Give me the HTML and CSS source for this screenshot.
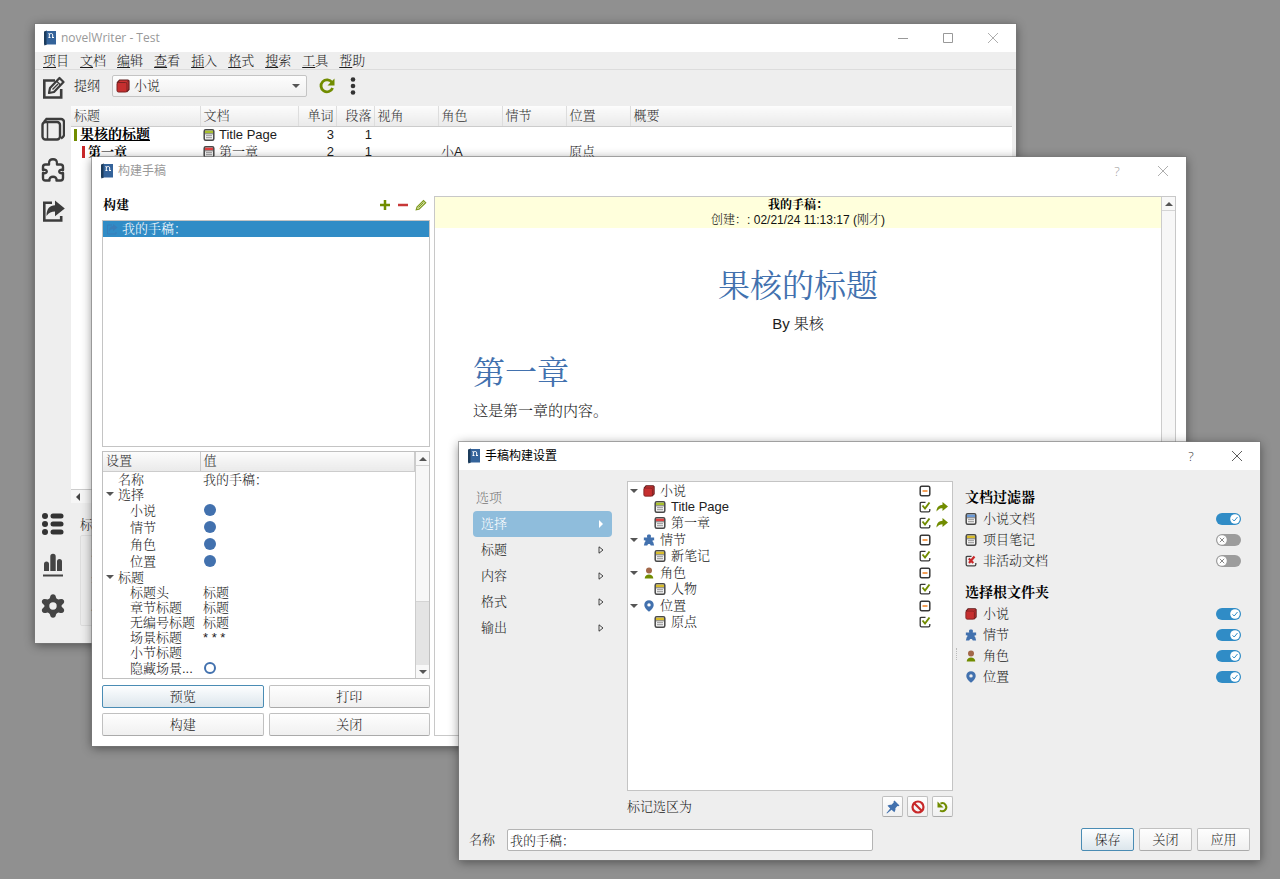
FILE: index.html
```html
<!DOCTYPE html>
<html lang="zh-CN">
<head>
<meta charset="utf-8">
<title>novelWriter - Test</title>
<link rel="stylesheet" href="styles.css">
</head>
<body>
<svg class="defs" aria-hidden="true">
  <symbol id="app" viewBox="0 0 14 16"><path d="M1 1.500 4 .5v14l-2.500 1L1 14z" fill="#1c3c5c"/><path d="M3.500 1H13v13.500H3.500z" fill="#34639a"/><path d="M5.500 7.500h2M6.300 7.500V3.500H5.500M6.300 4.600c1-1.500 3.400-1.500 3.400.3v2.600M9 7.500h2" fill="none" stroke="#fff" stroke-width="1"/></symbol>
  <symbol id="edit" viewBox="0 0 24 24"><path d="M14 4.500H3.300v17h16.900V13" fill="none" stroke="#3c3c3c" stroke-width="2.600"/><path d="m9 12 9.500-10 4 4L13 16l-5 1z" fill="#eee" stroke="#3c3c3c" stroke-width="2.200" stroke-linejoin="round"/><path d="m15.500 5 4 4M11.500 13.500l5.500-5.500" stroke="#3c3c3c" stroke-width="1.400"/></symbol>
  <symbol id="novel" viewBox="0 0 24 24"><path d="m3 5 2.500-3h14.500a3 3 0 0 1 3 3v13q0 1.500-3 3.500" fill="none" stroke="#3c3c3c" stroke-width="2.400"/><rect x="1.500" y="5" width="17.500" height="17.500" rx="3" fill="none" stroke="#3c3c3c" stroke-width="2.400"/><path d="M6.500 6v16" stroke="#3c3c3c" stroke-width="1.500"/></symbol>
  <symbol id="puzzle" viewBox="0 0 24 24"><path d="M4.500 6.500H8C7.500 2 10 1.300 12 1.300S16.500 2 16 6.500h3.500Q22 6.500 22 9v3c-5-1.500-5 4.500 0 3v5q0 2.500-2.500 2.500h-4c1-5-8-5-7 0h-4Q2 22.500 2 20v-5c5 1.500 5-4.500 0-3V9q0-2.500 2.500-2.500z" fill="none" stroke="#3c3c3c" stroke-width="2.400" stroke-linejoin="round"/></symbol>
  <symbol id="export" viewBox="0 0 24 24"><path d="M11 3.800H3.300v17.700h16.900V17" fill="none" stroke="#3c3c3c" stroke-width="2.600"/><path d="M14 1.500 23.800 9.500 14 17.300v-4.800c-3.500 0-6 1-8.500 4.500C5.500 9.500 9 6.500 14 6.300z" fill="#3c3c3c"/></symbol>
  <symbol id="list" viewBox="0 0 24 24"><g fill="#333"><circle cx="4" cy="4" r="3"/><circle cx="4" cy="12" r="3"/><circle cx="4" cy="20" r="3"/><rect x="9.500" y="1.500" width="13" height="5" rx="2.500"/><rect x="9.500" y="9.500" width="13" height="5" rx="2.500"/><rect x="9.500" y="17.500" width="13" height="5" rx="2.500"/></g></symbol>
  <symbol id="stats" viewBox="0 0 24 24"><g fill="#444"><path d="M3 18v-7a2.500 2.500 0 0 1 5 0v7zM9.300 18V3.500a2.500 2.500 0 0 1 5.400 0V18zM16 18V8.500a2.500 2.500 0 0 1 5 0V18z"/><rect x="2" y="21.500" width="20" height="2"/></g></symbol>
  <symbol id="gear" viewBox="0 0 24 24"><path fill="#444" fill-rule="evenodd" d="M9 3.500Q9.500.3 12 .3t3 3.200q.3 1 1.300 1.600 1 .5 2 .2 3.200-1.200 4.500 1 1.200 2.200-1.400 4.200-.9.700-.9 1.500t.9 1.500q2.600 2 1.400 4.200-1.300 2.200-4.500 1-1-.3-2 .2-1 .6-1.300 1.600-.5 3.200-3 3.200t-3-3.200q-.3-1-1.300-1.600-1-.5-2-.2-3.200 1.200-4.500-1-1.200-2.200 1.400-4.200.9-.7.900-1.500t-.9-1.500Q0 8.500 1.200 6.300q1.300-2.200 4.500-1 1 .3 2-.2Q8.700 4.500 9 3.500zM12 8.300a3.700 3.700 0 1 0 0 7.400 3.700 3.700 0 0 0 0-7.400z"/></symbol>
  <symbol id="book" viewBox="0 0 14 14"><path d="M1 4 3.500 1H12l1 1v8.500L10.500 13" fill="#c33" stroke="#5f1f1f" stroke-width="1.200"/><rect x="1" y="3.500" width="10" height="9.500" rx="1.500" fill="#c62f2f" stroke="#7a2222"/><path d="m11 3.500 1.800-2" stroke="#7a2222"/></symbol>
  <symbol id="doc" viewBox="0 0 12 12"><rect x="1.200" y=".8" width="9.600" height="10.400" rx="1.500" fill="#f4f4f4" stroke="#484848" stroke-width="1.500"/><path d="M2 1.700h8v2.500H2z" fill="currentColor"/><path d="M2 4.800h8" stroke="#555" stroke-width=".8"/><path d="M3 6.700h6M3 8.700h6" stroke="#888" stroke-width=".9"/></symbol>
  <symbol id="star" viewBox="0 0 14 14"><path fill="#4271ae" d="M5 4C4 1 5.500.5 7 .5S10 1 9 4h4v3.500c-2.500-.5-2.500 1.500-1 2L13 13.500H9c0-2.500-4-2.500-4 0H1L2 9.500c1.500-.5 1.500-2.500-1-2V4z"/></symbol>
  <symbol id="person" viewBox="0 0 14 14"><circle cx="7" cy="4" r="3.500" fill="#a3684a"/><path d="M2 13.500c0-6.500 10-6.500 10 0z" fill="#718c00"/></symbol>
  <symbol id="pin" viewBox="0 0 14 14"><path fill="#4271ae" fill-rule="evenodd" d="M7 13.800Q1.500 9 1.500 5.700a5.500 5.500 0 0 1 11 0Q12.500 9 7 13.800zM7 3.700a2 2 0 1 0 0 4 2 2 0 0 0 0-4z"/></symbol>
  <symbol id="check" viewBox="0 0 12 12"><path d="M6.500 1.300H2.500Q1.200 1.300 1.200 2.500v7q0 1.300 1.300 1.300h7q1.300 0 1.300-1.300V8" fill="none" stroke="#383838" stroke-width="1.300"/><path d="M3.500 4.500 6 7.500l4.500-6" fill="none" stroke="#718c00" stroke-width="1.900"/></symbol>
  <symbol id="minus" viewBox="0 0 12 12"><rect x="1.200" y="1.200" width="9.600" height="9.600" rx="1.500" fill="#fff" stroke="#383838" stroke-width="1.500"/><path d="M3.500 6h5" stroke="#f08020" stroke-width="1.500"/></symbol>
  <symbol id="cross" viewBox="0 0 12 12"><path d="M6.500 1.300H2.500Q1.200 1.300 1.200 2.500v7q0 1.300 1.300 1.300h7q1.300 0 1.300-1.300V8" fill="none" stroke="#444" stroke-width="1.300"/><path d="m3.800 3.500 4.500 4.500M9.500 1.500 4 8" fill="none" stroke="#c82829" stroke-width="2.200"/></symbol>
  <symbol id="arrow" viewBox="0 0 12 12"><path fill="#718c00" d="m6.500 1 5.500 4.500L6.500 10V7.300C4 7.300 2.500 8 .5 10.500.5 6 3 4 6.500 3.700z"/></symbol>
  <symbol id="refresh" viewBox="0 0 16 16"><path d="M13 4.500A6 6 0 1 0 13.600 10" fill="none" stroke="#718c00" stroke-width="2.800"/><path d="M15.500 .5v7H8.500z" fill="#718c00"/></symbol>
  <symbol id="revert" viewBox="0 0 14 14"><path d="M4.500 3.600A4 4 0 1 1 4 10.500" fill="none" stroke="#718c00" stroke-width="2"/><path d="M1.500 1.500v6h6z" fill="#718c00"/></symbol>
  <symbol id="ban" viewBox="0 0 14 14"><circle cx="7" cy="7" r="5.500" fill="none" stroke="#c82829" stroke-width="2.200"/><path d="m3.500 3.500 7 7" stroke="#c82829" stroke-width="2.200"/></symbol>
  <symbol id="tack" viewBox="0 0 14 14"><path fill="#4271ae" d="m8.500.500 5 5-1.200.8-.9-.2-2 2.200q.6 2.300-1 4L5.500 9.800 1 13.500.500 13l3.700-4.500L1.500 5.800q1.800-1.600 4-1l2.200-2.200-.2-1z"/></symbol>
  <symbol id="plus" viewBox="0 0 12 12"><path d="M6 1v10M1 6h10" stroke="#718c00" stroke-width="2.500"/></symbol>
  <symbol id="dash" viewBox="0 0 12 12"><path d="M1 6h10" stroke="#c83838" stroke-width="2.500"/></symbol>
  <symbol id="pencil" viewBox="0 0 12 12"><path d="M1.200 10.800 2 8l6.500-6.500 2.200 2.200L4 10.200z" fill="#e4edc0" stroke="#7f9a20" stroke-width="1.200"/><path d="m3.500 8.500 5-5" stroke="#7f9a20"/></symbol>
  <symbol id="x" viewBox="0 0 12 12"><path d="m1 1 10 10M11 1 1 11" stroke="currentColor" stroke-width=".8"/></symbol>
  <symbol id="down" viewBox="0 0 8 4"><path d="M0 0h8L4 4z" fill="#555"/></symbol>
  <symbol id="up" viewBox="0 0 8 4"><path d="M0 4h8L4 0z" fill="#555"/></symbol>
  <symbol id="left" viewBox="0 0 4 8"><path d="M4 0v8L0 4z" fill="#444"/></symbol>
  <symbol id="tri" viewBox="0 0 6 8"><path d="M1 .8v6.400L5 4z" fill="none" stroke="currentColor" stroke-width=".8"/></symbol>
  <symbol id="trifill" viewBox="0 0 6 8"><path d="M1 0v8l4-4z" fill="#fff"/></symbol>
  <symbol id="knobon" viewBox="0 0 10 10"><circle cx="5" cy="5" r="4.800" fill="#fff"/><path d="m2.500 5.300 1.700 1.700L7.500 3" fill="none" stroke="#308cc6" stroke-width="1"/></symbol>
  <symbol id="knoboff" viewBox="0 0 10 10"><circle cx="5" cy="5" r="4.800" fill="#fff"/><path d="m2.800 2.800 4.400 4.400M7.200 2.800 2.800 7.200" stroke="#888" stroke-width="1"/></symbol>
</svg>

<main class="desktop">
<section class="window win-main">
  <header class="titlebar inactive">
    <svg class="i-app"><use href="#app"/></svg><h1 class="caption">novelWriter - Test</h1>
    <div class="controls wide">
      <button aria-label="最小化"><svg class="i12" viewBox="0 0 12 12"><path d="M1 6.500h10" stroke="currentColor"/></svg></button>
      <button aria-label="最大化"><svg class="i12" viewBox="0 0 12 12"><path d="M1.500 1.500h9v9h-9z" fill="none" stroke="currentColor"/></svg></button>
      <button aria-label="关闭"><svg class="i12"><use href="#x"/></svg></button>
    </div>
  </header>
  <nav class="menubar">
    <button><u>项</u>目</button><button><u>文</u>档</button><button><u>编</u>辑</button><button><u>查</u>看</button><button><u>插</u>入</button><button><u>格</u>式</button><button><u>搜</u>索</button><button><u>工</u>具</button><button><u>帮</u>助</button>
  </nav>
  <div class="main-body">
    <aside class="sidebar">
      <button aria-label="编辑"><svg class="i24"><use href="#edit"/></svg></button>
      <button aria-label="小说"><svg class="i24"><use href="#novel"/></svg></button>
      <button aria-label="笔记"><svg class="i24"><use href="#puzzle"/></svg></button>
      <button aria-label="构建"><svg class="i24"><use href="#export"/></svg></button>
      <span class="spring"></span>
      <button aria-label="详情"><svg class="i24"><use href="#list"/></svg></button>
      <button aria-label="统计"><svg class="i24"><use href="#stats"/></svg></button>
      <button aria-label="设置"><svg class="i24"><use href="#gear"/></svg></button>
    </aside>
    <div class="outline">
      <div class="toolbar">
        <label for="root">提纲</label>
        <div class="combo"><svg class="i14 combo-icon"><use href="#book"/></svg><select id="root"><option>小说</option></select><svg class="i-down combo-arrow"><use href="#down"/></svg></div>
        <button class="tool" aria-label="刷新"><svg class="i16"><use href="#refresh"/></svg></button>
        <button class="tool" aria-label="更多"><svg class="i-more" viewBox="0 0 6 18"><g fill="#333"><circle cx="3" cy="2.500" r="2.300"/><circle cx="3" cy="9" r="2.300"/><circle cx="3" cy="15.500" r="2.300"/></g></svg></button>
      </div>
      <div class="outline-scroll">
        <table class="outline-table">
          <colgroup><col class="c-title"><col class="c-doc"><col class="c-num"><col class="c-num"><col class="c-tag"><col class="c-tag"><col class="c-tag"><col class="c-tag"><col></colgroup>
          <thead><tr><th>标题</th><th>文档</th><th class="num">单词</th><th class="num">段落</th><th>视角</th><th>角色</th><th>情节</th><th>位置</th><th>概要</th></tr></thead>
          <tbody>
            <tr><td><span class="level green"><b><u>果核的标题</u></b></span></td><td><span class="with-icon"><svg class="i-doc c-green"><use href="#doc"/></svg>Title Page</span></td><td class="num">3</td><td class="num">1</td><td></td><td></td><td></td><td></td><td></td></tr>
            <tr><td><span class="level red"><b>第一章</b></span></td><td><span class="with-icon"><svg class="i-doc c-red"><use href="#doc"/></svg>第一章</span></td><td class="num">2</td><td class="num">1</td><td></td><td>小A</td><td></td><td>原点</td><td></td></tr>
          </tbody>
        </table>
      </div>
      <div class="hscroll"><svg class="i-left"><use href="#left"/></svg></div>
      <div class="details"><span>标题</span><div class="groupbox"><span>状态</span><span>字数</span><span>段落</span></div></div>
    </div>
  </div>
</section>

<section class="window win-build">
  <header class="titlebar inactive">
    <svg class="i-app"><use href="#app"/></svg><h2 class="caption">构建手稿</h2>
    <div class="controls"><button class="latin" aria-label="帮助">?</button><button aria-label="关闭"><svg class="i12"><use href="#x"/></svg></button></div>
  </header>
  <div class="build-body">
    <div class="build-left">
      <div class="build-head"><b>构建</b>
        <button aria-label="添加"><svg class="i12"><use href="#plus"/></svg></button>
        <button aria-label="删除"><svg class="i12"><use href="#dash"/></svg></button>
        <button aria-label="编辑构建"><svg class="i12"><use href="#pencil"/></svg></button>
      </div>
      <ul class="build-list"><li><svg class="i12 ghost" viewBox="0 0 12 12"><path d="M6 2H1.500v9H10V9" fill="none" stroke="#4271ae"/><path d="m7 1 4.500 3.500L7 8V6q-3 0-4 2.500Q3 3.500 7 3z" fill="#4271ae"/></svg>我的手稿：</li></ul>
      <div class="settings">
        <div class="settings-scroll">
          <table class="settings-table">
            <colgroup><col class="c-key"><col></colgroup>
            <thead><tr><th>设置</th><th>值</th></tr></thead>
            <tbody>
              <tr><td class="l1">名称</td><td>我的手稿：</td></tr>
              <tr><td class="l1"><svg class="i-down branch"><use href="#down"/></svg>选择</td><td></td></tr>
              <tr class="tall"><td class="l2">小说</td><td><i class="dot"></i></td></tr>
              <tr class="tall"><td class="l2">情节</td><td><i class="dot"></i></td></tr>
              <tr class="tall"><td class="l2">角色</td><td><i class="dot"></i></td></tr>
              <tr class="tall"><td class="l2">位置</td><td><i class="dot"></i></td></tr>
              <tr><td class="l1"><svg class="i-down branch"><use href="#down"/></svg>标题</td><td></td></tr>
              <tr><td class="l2">标题头</td><td>标题</td></tr>
              <tr><td class="l2">章节标题</td><td>标题</td></tr>
              <tr><td class="l2">无编号标题</td><td>标题</td></tr>
              <tr><td class="l2">场景标题</td><td>* * *</td></tr>
              <tr><td class="l2">小节标题</td><td></td></tr>
              <tr class="tall"><td class="l2">隐藏场景...</td><td><i class="dot hollow"></i></td></tr>
              <tr class="tall"><td class="l2"></td><td><i class="dot"></i></td></tr>
            </tbody>
          </table>
        </div>
        <div class="vscroll"><span class="vend"><svg class="i-down"><use href="#up"/></svg></span><span class="vthumb"></span><span class="vtrack"></span><span class="vend"><svg class="i-down"><use href="#down"/></svg></span></div>
      </div>
      <div class="build-buttons"><button class="btn primary">预览</button><button class="btn">打印</button><button class="btn">构建</button><button class="btn">关闭</button></div>
    </div>
    <div class="preview">
      <article class="page">
        <div class="banner"><b>我的手稿：</b><span>创建：: 02/21/24 11:13:17 (刚才)</span></div>
        <h1 class="book-title">果核的标题</h1>
        <p class="byline">By 果核</p>
        <h2 class="chapter">第一章</h2>
        <p class="para">这是第一章的内容。</p>
      </article>
      <div class="vscroll"><span class="vend"><svg class="i-down"><use href="#up"/></svg></span><span class="vthumb"></span></div>
    </div>
  </div>
</section>

<section class="window win-settings">
  <header class="titlebar">
    <svg class="i-app"><use href="#app"/></svg><h2 class="caption">手稿构建设置</h2>
    <div class="controls"><button class="latin" aria-label="帮助">?</button><button aria-label="关闭"><svg class="i12"><use href="#x"/></svg></button></div>
  </header>
  <div class="opts">
    <div class="opts-main">
      <nav class="opt-nav">
        <h3>选项</h3>
        <button class="on">选择<svg class="i-tri"><use href="#trifill"/></svg></button>
        <button>标题<svg class="i-tri"><use href="#tri"/></svg></button>
        <button>内容<svg class="i-tri"><use href="#tri"/></svg></button>
        <button>格式<svg class="i-tri"><use href="#tri"/></svg></button>
        <button>输出<svg class="i-tri"><use href="#tri"/></svg></button>
      </nav>
      <div class="tree-col">
        <ul class="tree">
          <li class="root"><svg class="i-down"><use href="#down"/></svg><svg class="i12"><use href="#book"/></svg><span>小说</span><svg class="i12"><use href="#minus"/></svg><i></i></li>
          <li><svg class="i-doc c-green"><use href="#doc"/></svg><span>Title Page</span><svg class="i12"><use href="#check"/></svg><svg class="i12"><use href="#arrow"/></svg></li>
          <li><svg class="i-doc c-red"><use href="#doc"/></svg><span>第一章</span><svg class="i12"><use href="#check"/></svg><svg class="i12"><use href="#arrow"/></svg></li>
          <li class="root"><svg class="i-down"><use href="#down"/></svg><svg class="i12"><use href="#star"/></svg><span>情节</span><svg class="i12"><use href="#minus"/></svg><i></i></li>
          <li><svg class="i-doc c-yellow"><use href="#doc"/></svg><span>新笔记</span><svg class="i12"><use href="#check"/></svg><i></i></li>
          <li class="root"><svg class="i-down"><use href="#down"/></svg><svg class="i12"><use href="#person"/></svg><span>角色</span><svg class="i12"><use href="#minus"/></svg><i></i></li>
          <li><svg class="i-doc c-yellow"><use href="#doc"/></svg><span>人物</span><svg class="i12"><use href="#check"/></svg><i></i></li>
          <li class="root"><svg class="i-down"><use href="#down"/></svg><svg class="i12"><use href="#pin"/></svg><span>位置</span><svg class="i12"><use href="#minus"/></svg><i></i></li>
          <li><svg class="i-doc c-yellow"><use href="#doc"/></svg><span>原点</span><svg class="i12"><use href="#check"/></svg><i></i></li>
        </ul>
        <div class="mark"><span>标记选区为</span>
          <button class="btn sq" aria-label="固定"><svg class="i14"><use href="#tack"/></svg></button>
          <button class="btn sq" aria-label="排除"><svg class="i14"><use href="#ban"/></svg></button>
          <button class="btn sq" aria-label="重置"><svg class="i14"><use href="#revert"/></svg></button>
        </div>
      </div>
      <div class="grip"></div>
      <div class="filters">
        <h3>文档过滤器</h3>
        <label><svg class="i-doc c-blue"><use href="#doc"/></svg><span>小说文档</span><span class="switch"><input type="checkbox" checked><svg><use href="#knobon"/></svg></span></label>
        <label><svg class="i-doc c-yellow"><use href="#doc"/></svg><span>项目笔记</span><span class="switch"><input type="checkbox"><svg><use href="#knoboff"/></svg></span></label>
        <label><svg class="i12"><use href="#cross"/></svg><span>非活动文档</span><span class="switch"><input type="checkbox"><svg><use href="#knoboff"/></svg></span></label>
        <h3>选择根文件夹</h3>
        <label><svg class="i12"><use href="#book"/></svg><span>小说</span><span class="switch"><input type="checkbox" checked><svg><use href="#knobon"/></svg></span></label>
        <label><svg class="i12"><use href="#star"/></svg><span>情节</span><span class="switch"><input type="checkbox" checked><svg><use href="#knobon"/></svg></span></label>
        <label><svg class="i12"><use href="#person"/></svg><span>角色</span><span class="switch"><input type="checkbox" checked><svg><use href="#knobon"/></svg></span></label>
        <label><svg class="i12"><use href="#pin"/></svg><span>位置</span><span class="switch"><input type="checkbox" checked><svg><use href="#knobon"/></svg></span></label>
      </div>
    </div>
    <footer class="opts-foot">
      <label for="name">名称</label><input id="name" type="text" value="我的手稿：">
      <span class="spring"></span>
      <button class="btn primary">保存</button><button class="btn">关闭</button><button class="btn">应用</button>
    </footer>
  </div>
</section>
</main>
</body>
</html>
```
FILE: styles.css
```css
* { box-sizing: border-box; }
html, body { height: 100%; }
body { margin: 0; background: #909090; overflow: hidden; }
body, button, input, select {
  font: 300 13px/16px "Liberation Sans", "Noto Serif CJK SC", "Noto Sans CJK SC", sans-serif;
  color: #1c1c1c;
}
button { background: none; border: 0; padding: 0; }
h1, h2, h3, p, ul { margin: 0; padding: 0; font-weight: 300; }
ul { list-style: none; }
b { font-weight: 700; color: #000; }
svg { display: block; flex: none; }
table { border-collapse: collapse; table-layout: fixed; width: 100%; }
th, td { padding: 0; font-weight: 300; text-align: left; white-space: nowrap; }
.defs { position: absolute; width: 0; height: 0; }
.spring { flex: 1; }

.i-app { width: 14px; height: 16px; }
.i12 { width: 12px; height: 12px; }
.i14 { width: 14px; height: 14px; }
.i16 { width: 16px; height: 16px; }
.i24 { width: 24px; height: 24px; }
.i-doc { width: 12px; height: 12px; }
.i-down { width: 8px; height: 4px; }
.i-left { width: 4px; height: 8px; }
.i-tri { width: 6px; height: 8px; }
.i-more { width: 6px; height: 18px; }
.c-green { color: #a9c12e; }
.c-red { color: #e04040; }
.c-yellow { color: #d8bc2c; }
.c-blue { color: #6a9ad8; }

.desktop { position: relative; height: 100%; }
.window { position: absolute; display: flex; flex-direction: column; overflow: hidden; background: #eee; box-shadow: 0 0 0 1px #7a7a7a99, 0 2px 10px #0007; }
.win-main { inset: 24px 264px 236px 35px; }
.win-build { inset: 157px 94px 133px 92px; background: #fff; }
.win-settings { inset: 442px 20px 19px 459px; }

.titlebar { display: flex; align-items: center; gap: 4px; height: 28px; padding: 0 17px 0 8px; background: #fff; flex: none; color: #000; }
.titlebar.inactive { color: #999; }
.titlebar button { color: #333; width: 12px; display: grid; place-items: center; }
.titlebar.inactive button { color: #999; }
.caption { font: 400 12px/16px "Open Sans", "Noto Sans CJK SC", sans-serif; flex: 1; }
.latin { font-family: "Open Sans", sans-serif; }
.controls { display: flex; gap: 34px; align-items: center; }
.controls.wide { gap: 33px; }

.menubar { display: flex; gap: 11px; height: 18px; padding: 0 8px; border-bottom: 1px solid #dcdcdc; flex: none; }
.menubar u { text-underline-offset: 2px; }
.main-body { display: flex; flex: 1; min-height: 0; }
.sidebar { display: flex; flex-direction: column; align-items: center; gap: 17px; width: 36px; padding: 6px 0 25px; flex: none; }
.sidebar .spring { margin: -17px 0 0; }
.outline { display: flex; flex-direction: column; flex: 1; min-width: 0; padding-right: 4px; }
.toolbar { display: flex; align-items: center; height: 32px; padding: 0 3px; margin-bottom: 4px; gap: 12px; flex: none; }
.combo { position: relative; width: 195px; }
.combo select { width: 100%; height: 22px; padding: 0 0 0 21px; appearance: none; border: 1px solid #c4c4c4; border-radius: 2px; background: linear-gradient(#fdfdfd, #f0f0f0); }
.combo-icon { position: absolute; left: 4px; top: 4px; }
.combo-arrow { position: absolute; right: 7px; top: 9px; }
.tool + .tool { margin-left: 3px; }
.outline-scroll { flex: 1; background: #fff; min-height: 0; overflow: hidden; }
.outline-table th { height: 20px; padding: 0 3px; border-right: 1px solid #ddd; border-bottom: 1px solid #ccc; background: linear-gradient(#fcfcfc, #eaeaea); color: #333; }
.outline-table th:last-child { border-right: 0; }
.outline-table td { height: 17px; line-height: 15px; padding: 0 3px; }
.outline-table .num { text-align: right; padding: 0 2px; }
.c-title { width: 129px; }
.c-doc { width: 98px; }
.c-num { width: 38px; }
.c-tag { width: 64px; }
.level { display: flex; align-items: center; gap: 3px; font-size: 14px; }
.level::before { content: ""; width: 3px; height: 12px; background: #718c00; }
.level.red { padding-left: 8px; font-size: 13px; }
.level.red::before { background: #c82829; }
.with-icon { display: flex; align-items: center; gap: 4px; }
.hscroll { display: flex; align-items: center; height: 14px; padding-left: 5px; margin-bottom: 1px; border-top: 1px solid #ccc; background: #f6f6f6; flex: none; }
.details { height: 139px; padding: 13px 9px 17px; display: flex; flex-direction: column; flex: none; }
.groupbox { flex: 1; margin-top: 2px; border: 1px solid #ddd; border-radius: 2px; padding: 10px; display: flex; flex-direction: column; justify-content: space-between; background: #ececec; }

.build-body { display: flex; gap: 4px; flex: 1; min-height: 0; padding: 11px 10px 10px; }
.build-left { display: flex; flex-direction: column; width: 328px; flex: none; }
.build-head { display: flex; align-items: center; gap: 6px; height: 24px; padding: 0 3px 6px 1px; flex: none; }
.build-head b { flex: 1; }
.build-list { flex: 1; border: 1px solid #c4c4c4; min-height: 0; }
.build-list li { display: flex; align-items: center; gap: 4px; height: 16px; padding-left: 3px; background: #308cc6; color: #fff; }
.ghost { opacity: .5; }
.settings { display: flex; height: 228px; margin: 4px 0 6px; border: 1px solid #c0c0c0; flex: none; overflow: hidden; }
.settings-scroll { flex: 1; overflow: hidden; }
.settings-table th { height: 19px; line-height: 16px; padding: 0 3px; background: linear-gradient(#fcfcfc, #eaeaea); border-bottom: 1px solid #ccc; border-right: 1px solid #ccc; color: #333; }
.settings-table td { height: 15px; line-height: 15px; padding: 0 3px; }
.settings-table .tall td { height: 17px; }
.settings-table .l1 { padding: 0 0 0 15px; position: relative; }
.settings-table .l2 { padding: 0 0 0 27px; }
.branch { position: absolute; left: 3px; top: 5px; }
.c-key { width: 97px; }
.dot { display: block; width: 12px; height: 12px; margin-left: 1px; border-radius: 50%; background: #4271ae; }
.dot.hollow { background: #fff; border: 2px solid #4271ae; }
.vscroll { width: 14px; display: flex; flex-direction: column; border-left: 1px solid #ccc; background: #e4e4e4; flex: none; }
.vend { height: 13px; display: grid; place-items: center; background: #f8f8f8; }
.vthumb { flex: 3; background: #f7f7f7; border: solid #d4d4d4; border-width: 1px 0; }
.vtrack { flex: 1 1 0; max-height: 63px; min-height: 63px; }
.build-buttons { display: grid; grid-template-columns: 1fr 1fr; gap: 5px; flex: none; }
.build-buttons .btn { padding-top: 1px; }
.btn { height: 23px; border: 1px solid #c0c0c0; border-bottom-color: #aaa; border-radius: 2px; background: linear-gradient(#fefefe, #f0f0f0); }
.build-buttons .btn { height: 23px; }
.btn.primary { border-color: #4a8cb4; background: linear-gradient(#fdfeff, #dce6ec); }
.preview { display: flex; flex: 1; min-width: 0; border: 1px solid #c8c8c8; }
.page { flex: 1; }
.banner { display: flex; flex-direction: column; align-items: center; height: 31px; padding-top: 1px; background: #ffffdc; font-size: 12px; line-height: 15px; }
.banner span { color: #111; }
.book-title, .chapter { font-size: 32px; line-height: 40px; font-weight: 400; color: #4271ae; }
.book-title { margin-top: 38px; text-align: center; }
.byline { margin-top: 8px; font-size: 15px; line-height: 20px; text-align: center; }
.chapter { margin: 19px 0 0 38px; }
.para { margin: 8px 0 0 38px; font-size: 15px; line-height: 20px; }

.opts { display: flex; flex-direction: column; flex: 1; min-height: 0; padding: 11px 10px 9px; }
.opts-main { display: flex; flex: 1; min-height: 0; }
.opt-nav { display: flex; flex-direction: column; width: 143px; padding: 9px 0 0 4px; flex: none; }
.opt-nav h3 { padding-left: 3px; margin-bottom: 5px; font-size: 13px; color: #777; }
.opt-nav button { display: flex; align-items: center; justify-content: space-between; height: 26px; padding: 0 8px; border-radius: 4px; text-align: left; }
.opt-nav .on { background: #8fbddc; color: #fff; }
.tree-col { display: flex; flex-direction: column; flex: 1; margin-left: 15px; min-width: 0; }
.tree { flex: 1; border: 1px solid #c4c4c4; background: #fff; overflow: hidden; }
.tree li { display: grid; grid-template-columns: 12px 1fr 12px 12px; align-items: center; column-gap: 5px; height: 16px; padding: 0 4px 0 26px; }
.tree .root { grid-template-columns: 8px 12px 1fr 12px 12px; height: 17px; padding-left: 2px; }
.tree span { color: #222; }
.mark { display: flex; gap: 4px; align-items: center; margin-top: 5px; flex: none; }
.mark span { flex: 1; }
.sq { width: 21px; height: 21px; display: grid; place-items: center; }
.grip { width: 4px; height: 12px; margin-top: 10px; align-self: center; border-right: 1px dotted #bbb; flex: none; }
.filters { width: 293px; padding: 6px 9px 0 8px; flex: none; }
.filters h3 { font-weight: 700; font-size: 14px; line-height: 20px; height: 21px; color: #000; }
.filters label + h3 { margin-top: 11px; }
.filters label { display: grid; grid-template-columns: 12px 1fr 25px; gap: 6px; align-items: center; height: 21px; }
.switch { position: relative; height: 12px; }
.switch input { display: block; appearance: none; width: 25px; height: 12px; margin: 0; border-radius: 6px; background: #9c9c9c; }
.switch input:checked { background: #308cc6; }
.switch svg { position: absolute; left: 1px; top: 1px; width: 10px; height: 10px; pointer-events: none; }
.switch input:checked + svg { left: 14px; }
.opts-foot { display: flex; align-items: center; gap: 5px; margin-top: 11px; flex: none; }
.opts-foot input { width: 366px; min-width: 0; height: 22px; margin-left: 7px; padding: 0 2px; border: 1px solid #b4b4b4; border-radius: 2px; background: #fff; }
.opts-foot .btn { width: 53px; }
```
